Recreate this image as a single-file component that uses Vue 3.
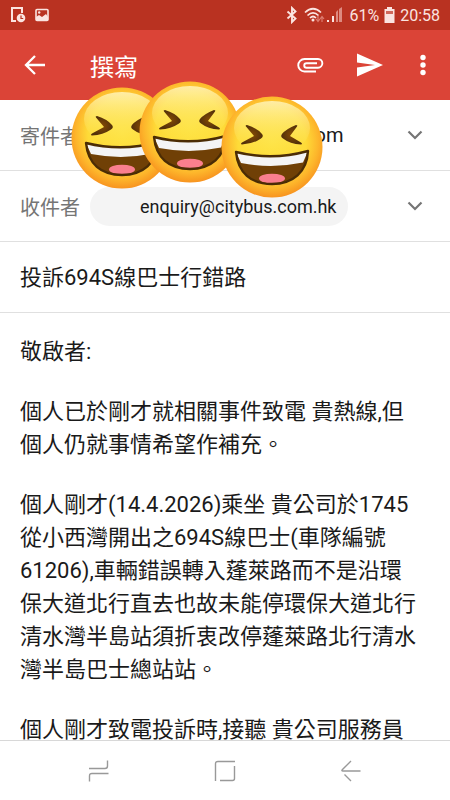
<template>
  <div class="screen">
    <div class="status">
      <div class="group">
        <svg width="16" height="18" viewBox="0 0 16 18">
          <path d="M6 15H2V2h10v5" fill="none" stroke="#fbe4e0" stroke-width="2" />
          <circle cx="11" cy="12" r="4.3" fill="#fbe4e0" />
          <path d="M11 9.500v3h2.200" fill="none" stroke="#b93221" stroke-width="1.200" />
        </svg>
        <svg class="picture" width="14" height="14" viewBox="0 0 14 14">
          <rect x="1" y="1.500" width="12" height="11" rx="1" fill="none" stroke="#fbe4e0" stroke-width="1.600" />
          <path d="M1 12V9l3-2 3 2 4-3 2 3v3z" fill="#fbe4e0" />
          <circle cx="4.200" cy="4.500" r="1.200" fill="#fbe4e0" />
        </svg>
      </div>
      <div class="group right">
        <svg width="12" height="18" viewBox="0 0 12 18">
          <path d="M1.500 5.500l8 7-3.500 3.500V2l3.500 3.500-8 7" fill="none" stroke="#fbe4e0" stroke-width="1.900" />
        </svg>
        <svg class="wifi" width="21" height="18" viewBox="0 0 21 18">
          <g fill="none" stroke="#fbe4e0" stroke-width="1.700">
            <path d="M1 6.500Q9 -1 17 6.500" />
            <path d="M3.500 9.500Q9 4 14.500 9.500" />
            <path d="M6 12Q9 9 12 12" />
          </g>
          <circle cx="9" cy="14" r="1.500" fill="#fbe4e0" />
          <path d="M14 10v5m-2-2l2 2.500 2-2.500M18 16v-5m-2 2l2-2.500 2 2.500" fill="none" stroke="#dd7c70" stroke-width="1.200" />
        </svg>
        <svg class="signal" width="16" height="18" viewBox="0 0 16 18">
          <path d="M0 14h2v2H0zM5 10h2v6H5z" fill="#fbe4e0" />
          <path d="M9 6l2-2v12H9zM12 3l3-2v15h-3z" fill="#dd8a80" />
        </svg>
        <span>61%</span>
        <svg class="battery" width="11" height="18" viewBox="0 0 11 18">
          <path d="M3 1h5v2h2.500v14H.5V3H3z" fill="#fbe4e0" />
          <path d="M2 5h7v3H2z" fill="#d0685b" />
        </svg>
        <span>20:58</span>
      </div>
    </div>

    <header class="bar">
      <button type="button" aria-label="返回">
        <svg width="24" height="24" viewBox="0 0 24 24">
          <path d="M22 12H4M12 3l-9 9 9 9" fill="none" stroke="#fff" stroke-width="2.300" />
        </svg>
      </button>
      <h1>撰寫</h1>
      <button type="button" aria-label="附件">
        <svg width="28" height="28" viewBox="0 0 28 28">
          <path d="M20 20.500H8.500a6.200 6.200 0 0 1 0-12.500H22a4.300 4.300 0 0 1 0 8.700H10.500a2.200 2.200 0 0 1 0-4.500H21" fill="none" stroke="#fff" stroke-width="1.900" />
        </svg>
      </button>
      <button type="button" class="send" aria-label="傳送">
        <svg width="28" height="28" viewBox="0 0 28 28">
          <path d="M1 2.500L27 14 1 25.500v-9L19 14 1 11.500z" fill="#fff" />
        </svg>
      </button>
      <button type="button" class="more" aria-label="更多">
        <svg width="8" height="24" viewBox="0 0 8 24">
          <g fill="#fff">
            <circle cx="4" cy="4.500" r="2.700" />
            <circle cx="4" cy="12" r="2.700" />
            <circle cx="4" cy="19.500" r="2.700" />
          </g>
        </svg>
      </button>
    </header>

    <div class="row">
      <span class="label">寄件者</span>
      <span class="sender">com</span>
      <button type="button" aria-label="選擇寄件者">
        <svg width="18" height="18" viewBox="0 0 18 18">
          <path d="M2.500 5.500L9 12l6.500-6.500" fill="none" stroke="#757575" stroke-width="2.200" />
        </svg>
      </button>
    </div>
    <div class="row">
      <span class="label">收件者</span>
      <span class="chip">enquiry@citybus.com.hk</span>
      <button type="button" aria-label="顯示副本">
        <svg width="18" height="18" viewBox="0 0 18 18">
          <path d="M2.500 5.500L9 12l6.500-6.500" fill="none" stroke="#757575" stroke-width="2.200" />
        </svg>
      </button>
    </div>
    <div class="row">
      <input v-model="subject" class="subject" type="text" aria-label="主旨">
    </div>

    <main class="message">
      <textarea
        v-for="(text, i) in paragraphs"
        :key="i"
        v-model="paragraphs[i]"
        rows="1"
        spellcheck="false"
        :aria-label="'內文第' + (i + 1) + '段'"
      ></textarea>
    </main>

    <nav class="nav">
      <button type="button" aria-label="最近使用">
        <svg width="24" height="24" viewBox="0 0 24 24">
          <path d="M2 9.500h16q2.500 0 2.500-2.500V1.500M21.500 14.500H5q-2.500 0-2.500 2.500v5.500" fill="none" stroke="#999" stroke-width="1.400" />
        </svg>
      </button>
      <button type="button" aria-label="主畫面">
        <svg width="24" height="24" viewBox="0 0 24 24">
          <path d="M2.500 22V5q0-2.500 2.500-2.500h17M21.500 7v12.500q0 2-2 2H7" fill="none" stroke="#999" stroke-width="1.400" />
        </svg>
      </button>
      <button type="button" aria-label="上一頁">
        <svg width="24" height="24" viewBox="0 0 24 24">
          <path d="M21.500 12H4q-2 0-.5-1.500L12 2M5.500 15.500L12 22" fill="none" stroke="#999" stroke-width="1.400" />
        </svg>
      </button>
    </nav>

    <!-- stickers over the sender address -->
    <svg class="faces" width="256" height="120" viewBox="0 0 256 120" aria-hidden="true">
      <defs>
        <radialGradient id="skin" cx="50%" cy="45%" r="56%">
          <stop offset="0" stop-color="#fee344" />
          <stop offset=".6" stop-color="#fedb38" />
          <stop offset=".82" stop-color="#fdb52b" />
          <stop offset="1" stop-color="#f7901e" />
        </radialGradient>
        <linearGradient id="shine" x1="0" y1="0" x2="0" y2="1">
          <stop offset="0" stop-color="#fff2b4" stop-opacity=".9" />
          <stop offset="1" stop-color="#ffe648" stop-opacity="0" />
        </linearGradient>
        <radialGradient id="eye">
          <stop offset="0" stop-color="#854b04" />
          <stop offset="1" stop-color="#52300a" />
        </radialGradient>
        <clipPath id="mouth">
          <path d="M-36 5Q0 14 36 4C35 25 21 37 0 37S-34 26-36 5z" />
        </clipPath>
      </defs>
      <g v-for="face in faces" :key="face.x" :transform="`translate(${face.x} ${face.y})`">
        <circle r="50.500" fill="url(#skin)" />
        <ellipse cy="-19" rx="38" ry="27" fill="url(#shine)" />
        <path d="M-25-22Q-15-19-10-13Q-8-10.500-11-8.500Q-19-3-30-2.500Q-32-3-30-4.500L-18-11L-26-20.500Q-27-22-25-22z" fill="url(#eye)" />
        <path d="M24-22Q14-18 10-13Q8-10.500 11-8.500Q18-3 29-2.500Q31-3 29-4.500L18-11L25-20.500Q26-22 24-22z" fill="url(#eye)" />
        <g clip-path="url(#mouth)">
          <rect x="-38" y="0" width="76" height="40" fill="#704006" />
          <path d="M-36 5Q0 14 36 4L31 15.500Q0 22-31 16z" fill="#f4f4f5" />
          <ellipse cy="31.500" rx="13" ry="4.800" fill="#fa7f8e" />
        </g>
        <path d="M-36 5Q0 14 36 4C35 25 21 37 0 37S-34 26-36 5z" fill="none" stroke="#4b2c05" stroke-width="2.400" stroke-linejoin="round" />
      </g>
    </svg>
  </div>
</template>

<script setup>
import { ref } from 'vue';

const subject = ref('投訴694S線巴士行錯路');

const paragraphs = ref([
  '敬啟者:',
  '個人已於剛才就相關事件致電 貴熱線,但個人仍就事情希望作補充。',
  '個人剛才(14.4.2026)乘坐 貴公司於1745從小西灣開出之694S線巴士(車隊編號61206),車輛錯誤轉入蓬萊路而不是沿環保大道北行直去也故未能停環保大道北行清水灣半島站須折衷改停蓬萊路北行清水灣半島巴士總站站。',
  '個人剛才致電投訴時,接聽 貴公司服務員',
]);

const faces = [
  { x: 52, y: 58 },
  { x: 120, y: 52 },
  { x: 202, y: 67 },
];
</script>

<style>
body {
  margin: 0;
}
</style>

<style scoped>
.screen {
  position: relative;
  display: flex;
  flex-direction: column;
  height: 100vh;
  overflow: hidden;
  background: #fff;
  color: #1a1a1a;
  font-family: Roboto, "Noto Sans CJK TC", sans-serif;
}
button {
  display: flex;
  padding: 0;
  border: 0;
  background: none;
  cursor: pointer;
}
svg {
  display: block;
  flex: none;
}
.status {
  display: flex;
  justify-content: space-between;
  align-items: center;
  flex: none;
  height: 30px;
  padding: 0 10px;
  background: #b93221;
  color: #fbe4e0;
  font-size: 16px;
}
.group {
  display: flex;
  align-items: center;
}
.picture {
  margin-left: 9px;
}
.wifi {
  margin-left: 6px;
}
.signal {
  margin: 0 6px 0 2px;
}
.battery {
  margin: 0 5px;
}
.bar {
  display: flex;
  align-items: center;
  flex: none;
  height: 70px;
  padding: 0 23px;
  background: #db4437;
  color: #fff;
}
.bar h1 {
  flex: 1;
  margin: 0 0 0 43px;
  font-size: 24px;
  font-weight: 400;
}
.send {
  margin-left: 32px;
}
.more {
  margin-left: 35px;
}
.row {
  display: flex;
  align-items: center;
  flex: none;
  height: 70px;
  padding: 0 26px 0 20px;
  border-bottom: 1px solid #e0e0e0;
}
.label {
  color: #757575;
  font-size: 20px;
}
.sender {
  flex: 1;
  margin-left: 224px;
  font-size: 20px;
}
.chip {
  margin: 0 auto 0 10px;
  padding: 0 12px 0 50px;
  border-radius: 20px;
  background: #f4f4f4;
  font-size: 18px;
  line-height: 39px;
}
.subject,
textarea {
  width: 100%;
  padding: 0;
  border: 0;
  outline: 0;
  background: none;
  color: inherit;
  font-family: inherit;
  font-size: 22px;
  line-height: 33px;
}
.message {
  display: flex;
  flex-direction: column;
  flex: 1;
  gap: 27px;
  min-height: 0;
  padding: 22px 30px 0 20px;
  overflow: hidden;
}
textarea {
  display: block;
  flex: none;
  overflow: hidden;
  resize: none;
  field-sizing: content;
}
.nav {
  display: flex;
  justify-content: space-around;
  align-items: center;
  flex: none;
  height: 59px;
  padding: 0 36px;
  border-top: 1px solid #d8d8d8;
}
.faces {
  position: absolute;
  top: 80px;
  left: 70px;
  pointer-events: none;
}
</style>
